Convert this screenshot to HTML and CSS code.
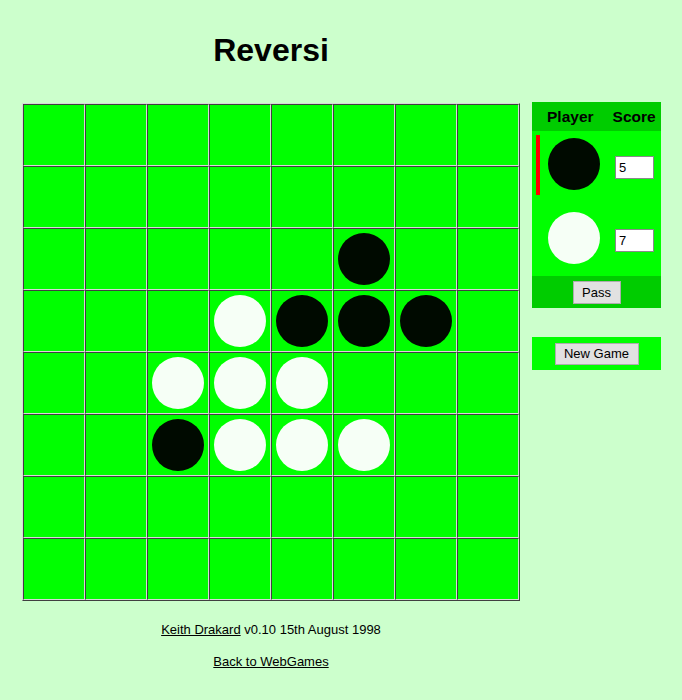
FILE: index.html
```html
<!DOCTYPE html>
<html>
<head>
<meta charset="utf-8">
<title>Reversi</title>
<link rel="stylesheet" href="styles.css">
</head>
<body>
<div class="page">
  <div class="main">
    <h1 class="title">Reversi</h1>
    <table class="board">
      <tr><td></td><td></td><td></td><td></td><td></td><td></td><td></td><td></td></tr>
      <tr><td></td><td></td><td></td><td></td><td></td><td></td><td></td><td></td></tr>
      <tr><td></td><td></td><td></td><td></td><td></td><td><div class="piece black"></div></td><td></td><td></td></tr>
      <tr><td></td><td></td><td></td><td><div class="piece white"></div></td><td><div class="piece black"></div></td><td><div class="piece black"></div></td><td><div class="piece black"></div></td><td></td></tr>
      <tr><td></td><td></td><td><div class="piece white"></div></td><td><div class="piece white"></div></td><td><div class="piece white"></div></td><td></td><td></td><td></td></tr>
      <tr><td></td><td></td><td><div class="piece black"></div></td><td><div class="piece white"></div></td><td><div class="piece white"></div></td><td><div class="piece white"></div></td><td></td><td></td></tr>
      <tr><td></td><td></td><td></td><td></td><td></td><td></td><td></td><td></td></tr>
      <tr><td></td><td></td><td></td><td></td><td></td><td></td><td></td><td></td></tr>
    </table>
    <p class="credit"><a href="#">Keith Drakard</a> v0.10 15th August 1998</p>
    <p class="credit"><a href="#">Back to WebGames</a></p>
  </div>
  <div class="side">
    <div class="panel">
      <div class="panel-head">
        <span class="head-player">Player</span>
        <span class="head-score">Score</span>
      </div>
      <div class="prow prow1">
        <div class="turn active"></div>
        <div class="piece black side-piece"></div>
        <input class="score" type="text" value="5">
      </div>
      <div class="prow prow2">
        <div class="turn"></div>
        <div class="piece white side-piece"></div>
        <input class="score" type="text" value="7">
      </div>
      <div class="panel-foot">
        <button class="btn btn-pass">Pass</button>
      </div>
    </div>
    <div class="newgame">
      <button class="btn btn-new">New Game</button>
    </div>
  </div>
</div>
</body>
</html>
```

FILE: styles.css
```css
html, body {
  margin: 0;
  padding: 0;
}
body {
  background: #ccffcc;
  font-family: "Liberation Sans", Arial, sans-serif;
  color: #000;
  padding: 8px;
}
.page {
  display: flex;
  align-items: flex-start;
  padding-left: 14px;
}
.main {
  width: 498px;
  padding-top: 24px;
}
.title {
  margin: 0 0 34px 0;
  font-size: 32px;
  line-height: 37px;
  font-weight: bold;
  text-align: center;
}
.board {
  border-collapse: separate;
  border-spacing: 0;
  border: 1px solid;
  border-color: #d8d8d8 #404040 #404040 #d8d8d8;
  background: #00ff00;
}
.board td {
  width: 60px;
  height: 60px;
  padding: 0;
  border: 1px solid;
  border-color: #404040 #d8d8d8 #d8d8d8 #404040;
  background: #00ff00;
  vertical-align: middle;
}
.piece {
  width: 52px;
  height: 52px;
  border-radius: 50%;
  margin: 0 auto;
}
.piece.black {
  background: #000a00;
}
.piece.white {
  background: #f6fff6;
}
.credit {
  margin: 0;
  font-size: 13px;
  line-height: 16px;
  text-align: center;
}
.credit:first-of-type {
  margin-top: 21px;
}
.credit + .credit {
  margin-top: 16px;
}
.credit a {
  color: #000;
  text-decoration: underline;
}
.side {
  margin-top: 94px;
  margin-left: 12px;
  width: 129px;
}
.panel {
  background: #00ff00;
}
.panel-head {
  background: #00cc00;
  height: 29px;
  line-height: 29px;
  font-size: 15.5px;
  font-weight: bold;
  display: flex;
  padding-left: 15px;
  white-space: nowrap;
}
.head-score {
  margin-left: 19px;
}
.prow {
  display: flex;
  align-items: flex-start;
}
.prow1 {
  height: 72px;
}
.prow2 {
  height: 73px;
}
.turn {
  width: 4px;
  height: 60px;
  margin-left: 4px;
  margin-top: 4px;
}
.turn.active {
  background: #ff0000;
}
.side-piece {
  margin: 7px 0 0 8px;
  flex: none;
}
.prow2 .side-piece {
  margin-top: 9px;
}
.score {
  box-sizing: border-box;
  width: 39px;
  height: 23px;
  margin: 25px 0 0 15px;
  padding: 0 0 0 3px;
  border: 1px solid #8a8a8a;
  background: #fff;
  font-family: "Liberation Sans", Arial, sans-serif;
  font-size: 13px;
  color: #000;
}
.prow2 .score {
  margin-top: 26px;
}
.panel-foot {
  background: #00cc00;
  height: 32px;
  display: flex;
  justify-content: center;
  align-items: center;
}
.btn {
  box-sizing: border-box;
  background: #e1e1e1;
  border: 1px solid #adadad;
  border-radius: 0;
  font-family: "Liberation Sans", Arial, sans-serif;
  font-size: 13px;
  color: #000;
  padding: 0;
}
.btn-pass {
  width: 48px;
  height: 23px;
}
.newgame {
  margin-top: 29px;
  height: 33px;
  background: #00ff00;
  display: flex;
  justify-content: center;
  align-items: center;
}
.btn-new {
  width: 84px;
  height: 22px;
}
```
